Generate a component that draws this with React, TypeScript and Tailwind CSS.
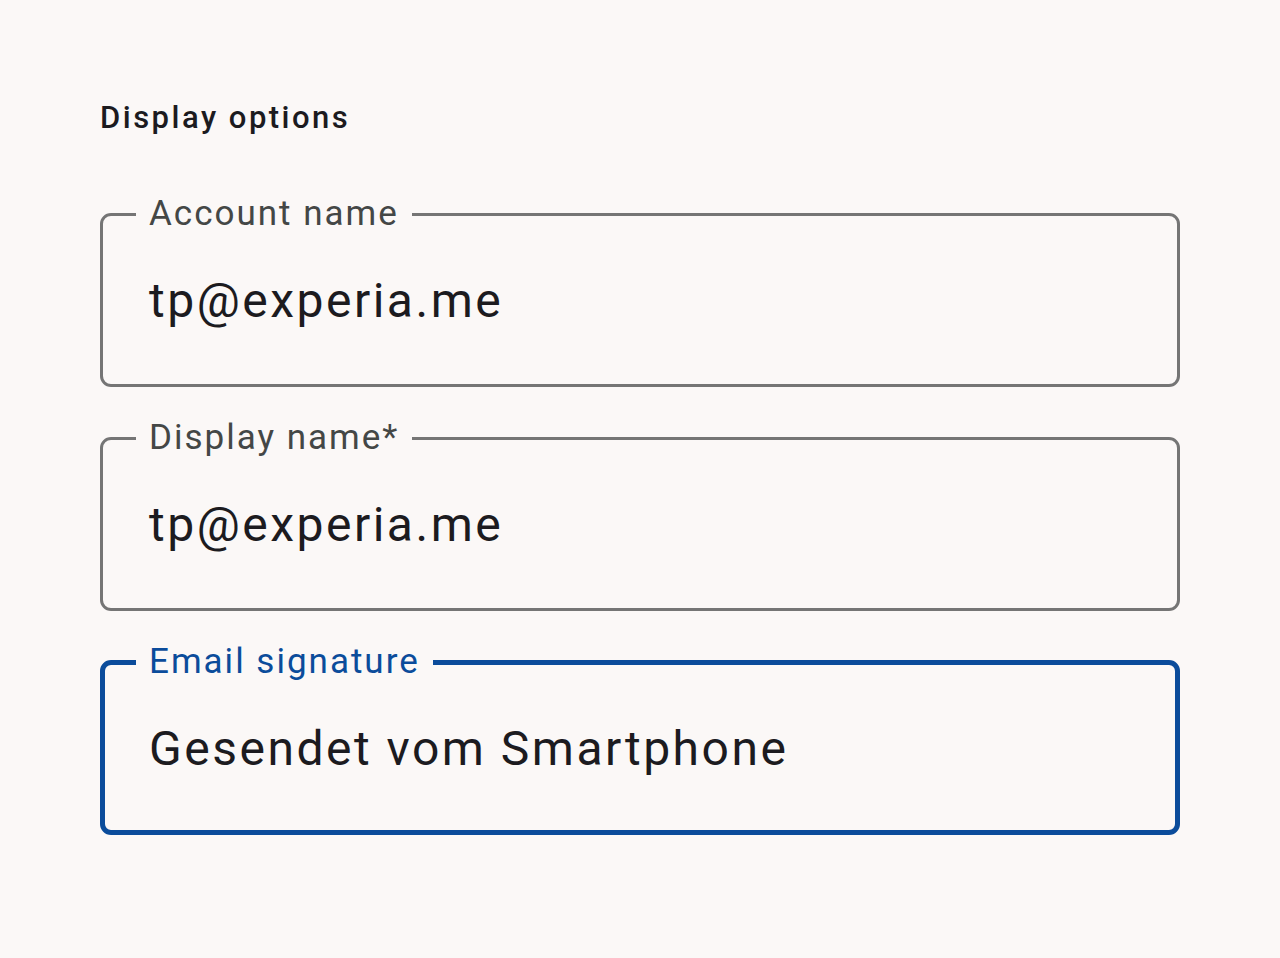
import React from 'react';

type FieldProps = {
  label: string;
  value: string;
  focused?: boolean;
};

// Outlined text field; the legend cuts a gap in the top border
const OutlinedField: React.FC<FieldProps> = ({ label, value, focused }) => {
  return (
    <fieldset
      className={`h-[193px] rounded-[11px] px-[33px] ${
        focused ? 'border-[5px] border-[#0b4c9b]' : 'border-[3px] border-[#757575]'
      }`}
    >
      <legend
        className={`px-[13px] text-[35px] leading-[40px] tracking-[2px] ${
          focused ? 'text-[#0b4c9b] -ml-[2px]' : 'text-[#444746]'
        }`}
      >
        {label}
      </legend>
      <div
        className={`pl-[13px] pt-[39px] text-[48px] leading-[56px] tracking-[2.5px] text-[#1c1b1f] ${
          focused ? '-ml-[2px]' : ''
        }`}
      >
        {value}
      </div>
    </fieldset>
  );
};

const App: React.FC = () => {
  return (
    <div className="min-h-screen bg-[#fbf8f7] px-[100px] pt-[96px] font-['Roboto',sans-serif]">
      <h2 className="text-[31px] font-medium leading-[44px] tracking-[2.5px] text-[#1c1b1f]">
        Display options
      </h2>

      <div className="mt-[54px] flex flex-col gap-[31px]">
        <OutlinedField label="Account name" value="tp@experia.me" />
        <OutlinedField label="Display name*" value="tp@experia.me" />
        <OutlinedField label="Email signature" value="Gesendet vom Smartphone" focused />
      </div>
    </div>
  );
};

export default App;
